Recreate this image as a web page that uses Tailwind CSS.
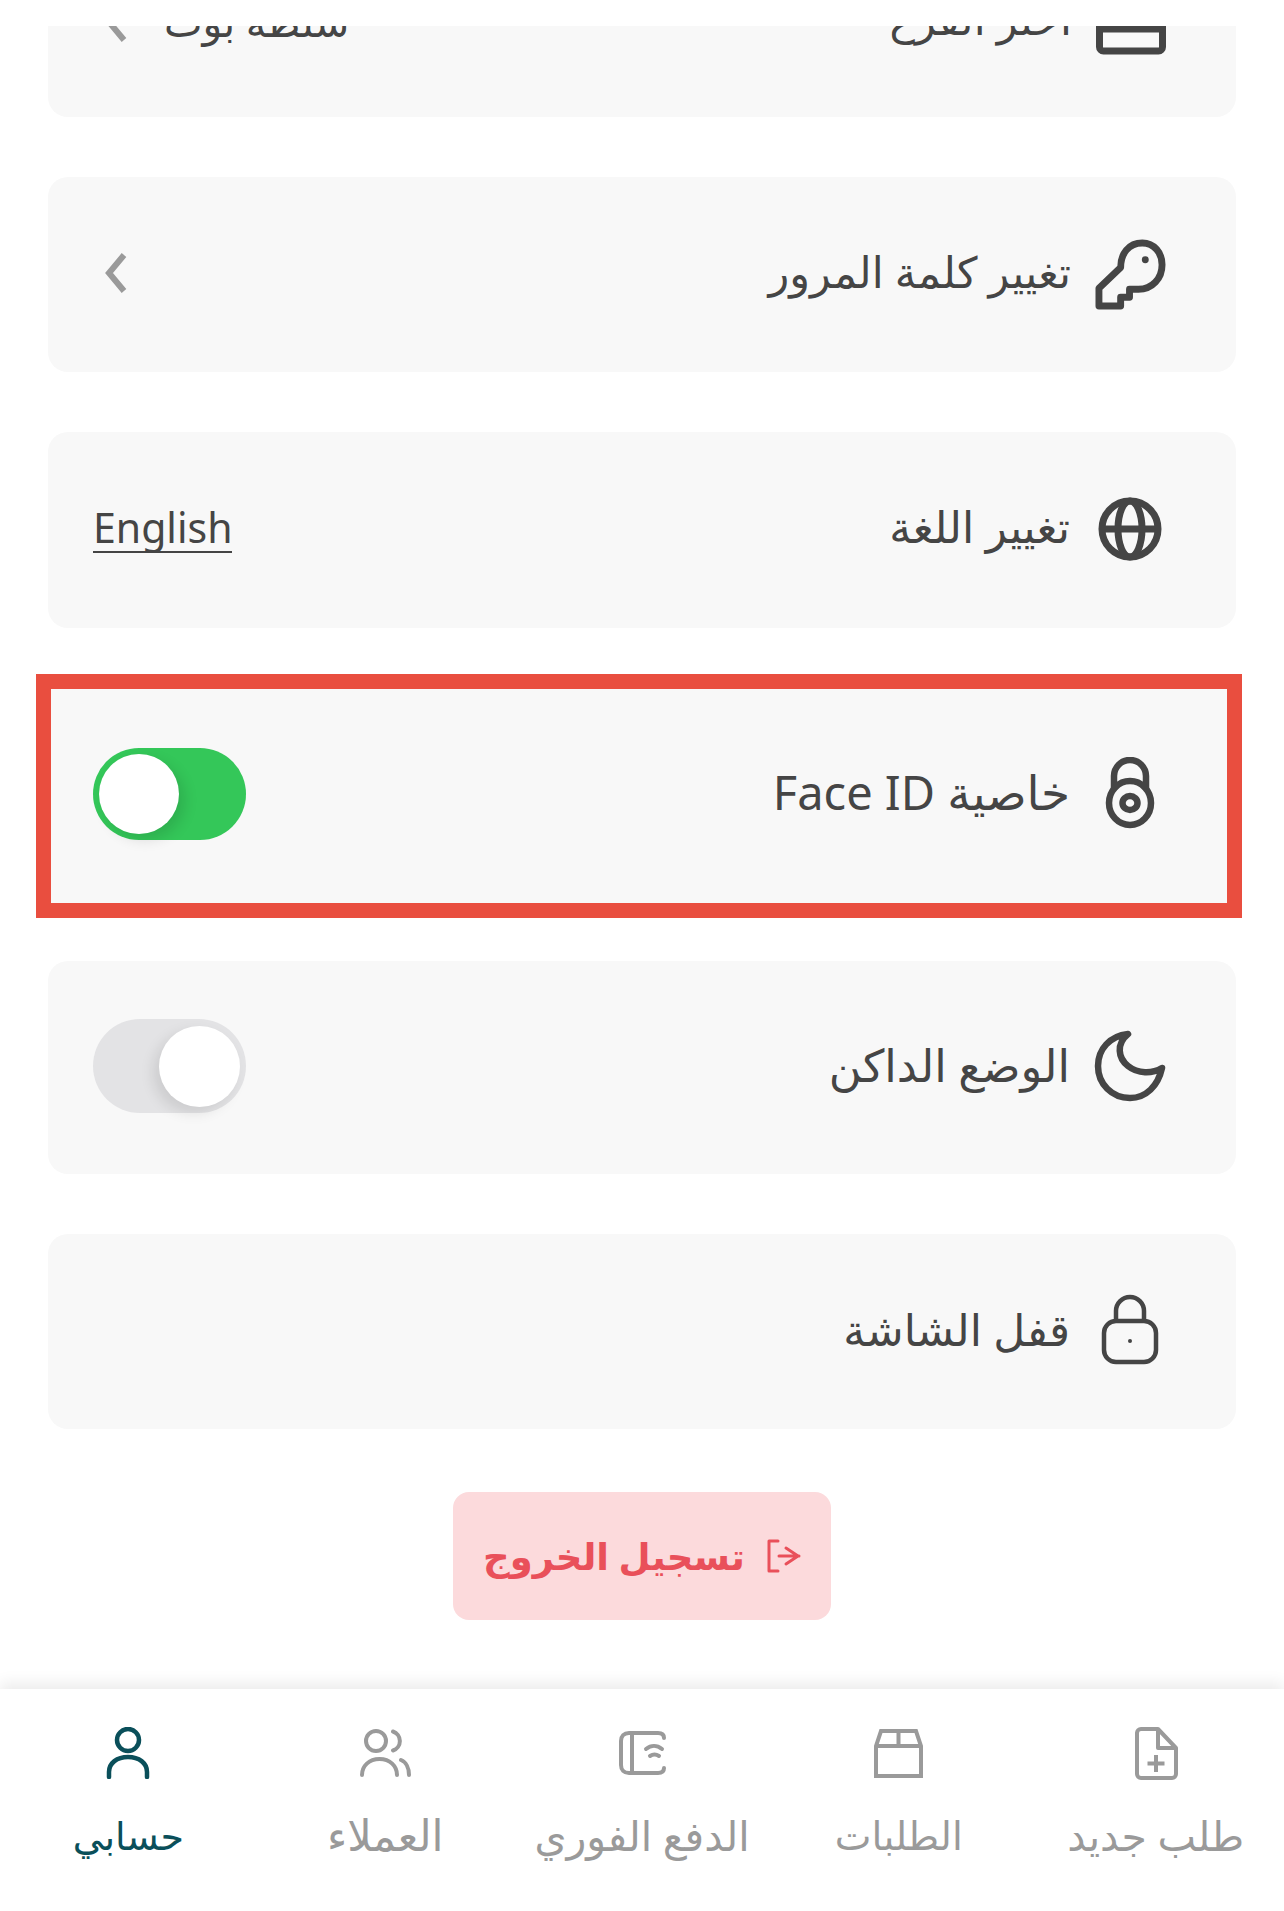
<!DOCTYPE html>
<html lang="ar" dir="rtl">
  <head>
    <meta charset="UTF-8" />
    <title>حسابي</title>
    <script src="https://cdn.jsdelivr.net/npm/@tailwindcss/browser@4"></script>
  </head>
  <body class="bg-white font-['Noto_Sans','DejaVu_Sans',sans-serif] text-[#454545]">
    <div class="flex h-[1911px] w-[1284px] flex-col overflow-hidden">
      <!-- Cut-off status strip -->
      <div class="h-[26px] shrink-0 bg-white"></div>

      <!-- Scrolled list -->
      <main class="flex-1 overflow-hidden px-[48px]">
        <div class="-mt-[104px] flex flex-col">
          <div class="mb-[60px] flex h-[195px] items-center justify-between rounded-[20px] bg-[#f8f8f8] pt-[4px] pr-[70px] pl-[56px]">
            <div class="flex items-center gap-[24px]">
              <svg class="h-[70px] w-[70px]" viewBox="0 0 70 70" fill="none" stroke="#454545" stroke-width="7"><rect x="3.5" y="8" width="63" height="56" rx="4"/><path d="M3 42h64"/></svg>
              <span class="mb-[4px] text-[43px]">اختر الفرع</span>
            </div>
            <div class="flex items-center gap-[36px] text-[41px]">
              <span>سلطة بوت</span>
              <svg class="h-[40px] w-[24px]" viewBox="0 0 24 40" fill="none" stroke="#9a9a9a" stroke-width="6"><path d="M20 2 5 20l15 18"/></svg>
            </div>
          </div>

          <div class="mb-[60px] flex h-[195px] items-center justify-between rounded-[20px] bg-[#f8f8f8] pr-[70px] pl-[56px]">
            <div class="flex items-center gap-[24px]">
              <svg class="h-[71px] w-[71px]" viewBox="0 0 72 72" fill="none" stroke="#454545" stroke-width="7" stroke-linejoin="round"><path d="M4 68V50l22-21c0-14 8-25 22-25 12 0 20 10 20 22 0 14-10 25-24 25H35v8H26v9z"/><circle cx="51" cy="21" r="3.5" fill="#454545" stroke="none"/></svg>
              <span class="mb-[4px] text-[43px]">تغيير كلمة المرور</span>
            </div>
            <svg class="mb-[4px] h-[40px] w-[24px]" viewBox="0 0 24 40" fill="none" stroke="#9a9a9a" stroke-width="6"><path d="M20 2 5 20l15 18"/></svg>
          </div>

          <div class="mb-[46px] flex h-[196px] items-center justify-between rounded-[20px] bg-[#f8f8f8] pr-[70px] pb-[2px] pl-[45px]">
            <div class="flex items-center gap-[24px]">
              <svg class="h-[72px] w-[72px]" viewBox="0 0 72 72" fill="none" stroke="#454545" stroke-width="7"><circle cx="36" cy="36" r="28"/><ellipse cx="36" cy="36" rx="12" ry="28"/><path d="M8 36h56"/></svg>
              <span class="mb-[6px] text-[44px]">تغيير اللغة</span>
            </div>
            <span class="mb-[2px] border-b-2 border-[#454545] text-[41px] leading-[48px]">English</span>
          </div>

          <!-- Highlighted row: annotation frame around the card -->
          <div class="-mr-[6px] -ml-[12px] mb-[43px] border-[15px] border-[#e94e3f]">
            <div class="flex h-[214px] items-center justify-between bg-[#f8f8f8] pr-[61px] pb-[4px] pl-[42px]">
              <div class="flex items-center gap-[24px]">
                <svg class="mb-[2px] h-[72px] w-[72px]" viewBox="0 0 72 72" fill="none" stroke="#454545" stroke-width="6.5"><path d="M20 33V19a16 16 0 0 1 32 0v14"/><ellipse cx="36" cy="46" rx="21" ry="22"/><ellipse cx="36" cy="46" rx="7.5" ry="7"/></svg>
                <span class="mb-[4px] text-[47px]">خاصية Face ID</span>
              </div>
              <div class="relative h-[92px] w-[153px] rounded-full bg-[#34c759]">
                <div class="absolute top-[6px] left-[6px] h-[80px] w-[80px] rounded-full bg-white shadow-[6px_6px_14px_rgba(0,0,0,0.12)]"></div>
              </div>
            </div>
          </div>

          <div class="mb-[60px] flex h-[213px] items-center justify-between rounded-[20px] bg-[#f8f8f8] pr-[70px] pb-[4px] pl-[45px]">
            <div class="flex items-center gap-[24px]">
              <svg class="h-[72px] w-[72px]" viewBox="0 0 72 72" fill="none" stroke="#454545" stroke-width="6.5" stroke-linejoin="round"><path d="M34 4C16 6 4 19 4 36c0 18 14 32 32 32 16 0 28-12 32-30-10 6-24 6-34-2C24 28 22 14 34 4z"/></svg>
              <span class="mb-[2px] text-[45px]">الوضع الداكن</span>
            </div>
            <div class="relative h-[94px] w-[153px] rounded-full bg-[#e3e3e5]">
              <div class="absolute top-[7px] right-[6px] h-[81px] w-[81px] rounded-full bg-white shadow-[-6px_6px_14px_rgba(0,0,0,0.1)]"></div>
            </div>
          </div>

          <div class="mb-[63px] flex h-[195px] items-center rounded-[20px] bg-[#f8f8f8] pr-[70px] pb-[4px] pl-[45px]">
            <div class="flex items-center gap-[24px]">
              <svg class="h-[72px] w-[72px]" viewBox="0 0 72 72" fill="none" stroke="#454545" stroke-width="4.5"><path d="M22 27V17a14 14 0 0 1 28 0v10"/><rect x="10" y="27" width="52" height="41" rx="12"/><circle cx="36" cy="47" r="2" fill="#454545" stroke="none"/></svg>
              <span class="mb-[2px] text-[44px]">قفل الشاشة</span>
            </div>
          </div>

          <button class="mx-auto flex h-[128px] w-[378px] items-center justify-center gap-[22px] rounded-[16px] bg-[#fcdadc] text-[37px] font-semibold text-[#e9505a]">
            <svg class="h-[34px] w-[34px]" viewBox="0 0 34 34" fill="none" stroke="#e9505a" stroke-width="3" stroke-linecap="round" stroke-linejoin="round"><path d="M32 17H12m7-8 12 8-12 8M11 2H2v30h9"/></svg>
            <span>تسجيل الخروج</span>
          </button>
        </div>
      </main>

      <!-- Bottom navigation -->
      <nav class="grid h-[222px] shrink-0 grid-cols-5 bg-white pt-[36px] text-[41px] leading-[60px] text-[#9a9a9a] shadow-[0_-6px_14px_rgba(0,0,0,0.08)]">
        <a class="flex flex-col items-center">
          <div class="flex h-[56px] items-center">
            <svg class="h-[53px] w-[44px]" viewBox="0 0 44 53" fill="none" stroke="#9a9a9a" stroke-width="4" stroke-linejoin="round"><path d="M7 2h17l18 19v26a4 4 0 0 1-4 4H7a4 4 0 0 1-4-4V6a4 4 0 0 1 4-4z"/><path d="M24 2v19h18M22 28v17M13.5 36.500h17"/></svg>
          </div>
          <span class="mt-[24px]">طلب جديد</span>
        </a>
        <a class="flex flex-col items-center">
          <div class="flex h-[56px] items-center">
            <svg class="h-[49px] w-[49px]" viewBox="0 0 49 49" fill="none" stroke="#9a9a9a" stroke-width="4"><path d="M2 47V17L7 2h35l5 15v30zM2 17h45M24.500 2v15"/></svg>
          </div>
          <span class="mt-[24px] text-[39px]">الطلبات</span>
        </a>
        <a class="flex flex-col items-center">
          <div class="flex h-[56px] items-center">
            <svg class="h-[44px] w-[47px]" viewBox="0 0 47 44" fill="none" stroke="#9a9a9a" stroke-width="4" stroke-linecap="round"><path d="M45 7c0-3-2-5-6-5H10C5 2 2 5 2 10v24c0 5 3 8 8 8h29c4 0 6-2 6-5M13 2v40"/><path d="M27 18c5-4 11-4 16 0M31 25c3-2 6-2 9 0"/></svg>
          </div>
          <span class="mt-[24px]">الدفع الفوري</span>
        </a>
        <a class="flex flex-col items-center">
          <div class="flex h-[56px] items-center">
            <svg class="h-[48px] w-[51px]" viewBox="0 0 51 48" fill="none" stroke="#9a9a9a" stroke-width="4" stroke-linecap="round"><circle cx="16" cy="12" r="10"/><path d="M33 2.500a10 10 0 0 1 0 19M2 46c0-9 7-16 17.500-16S37 37 37 46M41 31c5 2 8 8 8 15"/></svg>
          </div>
          <span class="mt-[24px] text-[43px]">العملاء</span>
        </a>
        <a class="flex flex-col items-center text-[#0a4f5a]">
          <div class="flex h-[56px] items-center">
            <svg class="h-[52px] w-[44px]" viewBox="0 0 44 52" fill="none" stroke="#0a4f5a" stroke-width="4.500" stroke-linecap="round"><circle cx="22" cy="13" r="11"/><path d="M3 50v-5c0-9 8-15 19-15s19 6 19 15v5"/></svg>
          </div>
          <span class="mt-[24px] text-[38px]">حسابي</span>
        </a>
      </nav>
    </div>
  </body>
</html>
